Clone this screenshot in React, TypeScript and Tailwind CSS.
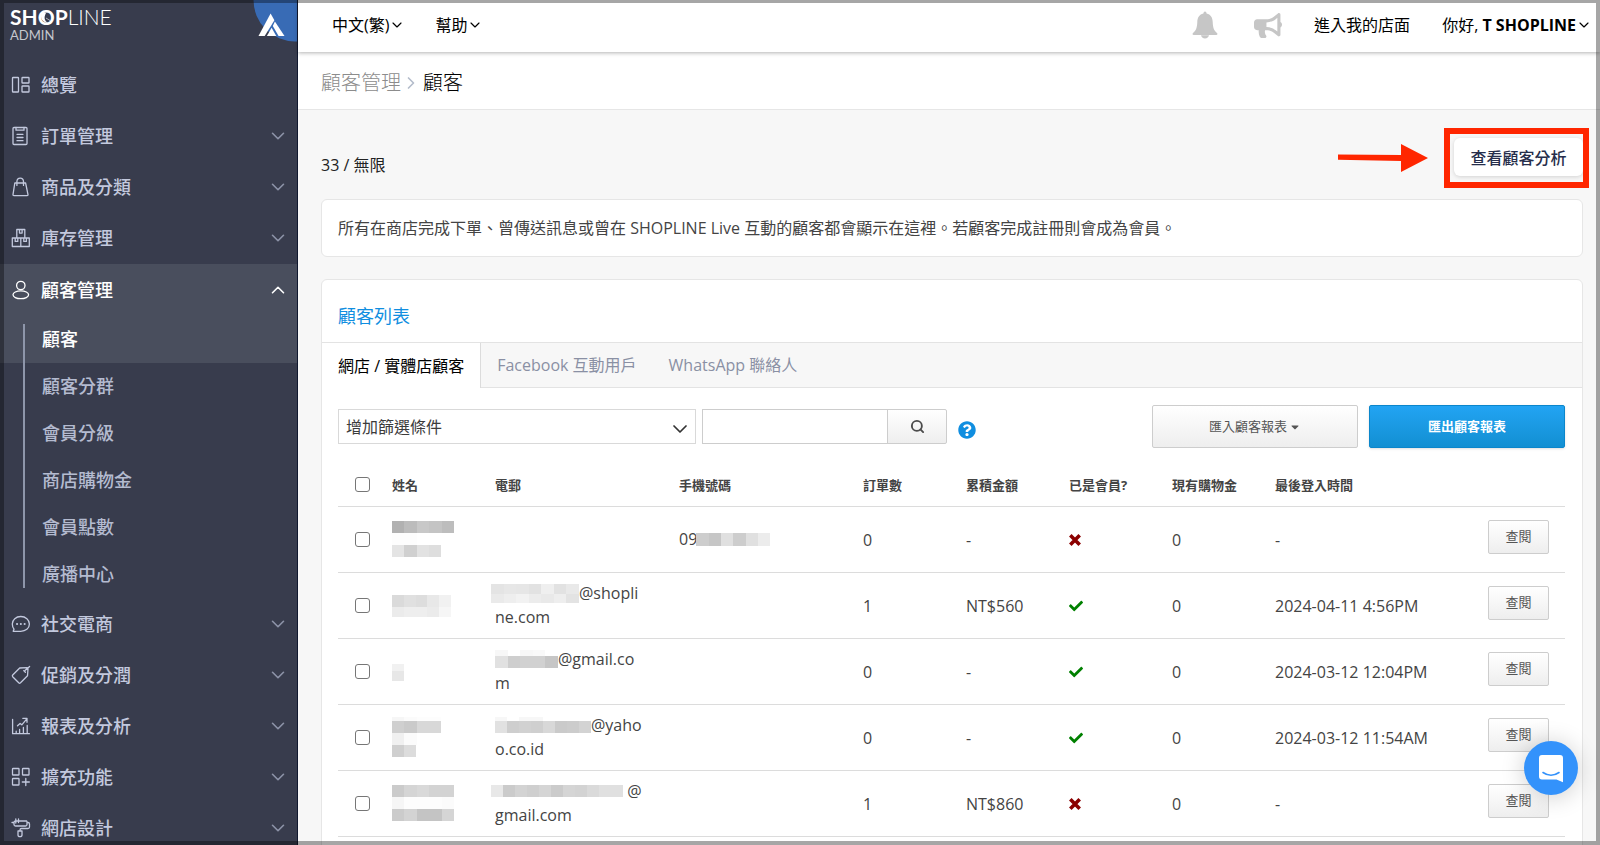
import React, { useState } from "react";
import { ChevronDown, ChevronRight, ChevronUp, Search } from "lucide-react";
import { FaBullhorn, FaCaretDown, FaCheck, FaQuestionCircle } from "react-icons/fa";

type Strip = { w: number; h: number; colors: string[] };

type Customer = {
  id: number;
  name: Strip[];
  email?: { strips: Strip[]; rest: string; second: string; className: string };
  phone?: { prefix: string; strips: Strip[] };
  orders: number;
  total: string;
  member: boolean;
  credit: number;
  lastLogin: string;
};

const customers: Customer[] = [
  {
    id: 1,
    name: [
      { w: 62, h: 12, colors: ["#b1b1b1", "#bcbcbc", "#c8c8c8", "#c4c4c4", "#bdbdbd"] },
      { w: 62, h: 12, colors: ["#fdfdfd", "#fdfdfd", "#ffffff", "#ffffff", "#ffffff"] },
      { w: 49, h: 12, colors: ["#e4e4e4", "#d0d0d0", "#e2e2e2", "#dedede"] },
    ],
    phone: {
      prefix: "09",
      strips: [{ w: 74, h: 13, colors: ["#cdcdcd", "#c6c6c6", "#e0e0e0", "#cdcdcd", "#e0e0e0", "#ececec"] }],
    },
    orders: 0,
    total: "-",
    member: false,
    credit: 0,
    lastLogin: "-",
  },
  {
    id: 2,
    name: [
      { w: 59, h: 12, colors: ["#dadada", "#e0e0e0", "#dddddd", "#e8e8e8", "#f1f1f1"] },
      { w: 59, h: 10, colors: ["#ebebeb", "#eeeeee", "#eeeeee", "#ebebeb", "#f6f6f6"] },
    ],
    email: {
      strips: [
        { w: 88, h: 10, colors: ["#e4e4e4", "#e7e7e7", "#e6e6e6", "#e2e2e2", "#efefef", "#e2e2e2", "#e9e9e9"] },
        { w: 88, h: 9, colors: ["#eaeaea", "#eeeeee", "#f2f2f2", "#ececec", "#e9e9e9", "#eeeeee", "#e3e3e3"] },
      ],
      rest: "@shopli",
      second: "ne.com",
      className: "-ml-1",
    },
    orders: 1,
    total: "NT$560",
    member: true,
    credit: 0,
    lastLogin: "2024-04-11 4:56PM",
  },
  {
    id: 3,
    name: [
      { w: 12, h: 7, colors: ["#f1f1f1"] },
      { w: 12, h: 10, colors: ["#e7e7e7"] },
    ],
    email: {
      strips: [
        { w: 63, h: 6, colors: ["#f7f7f7", "#ffffff", "#f7f7f7", "#f9f9f9", "#ffffff"] },
        { w: 63, h: 12, colors: ["#e1e1e1", "#cecece", "#d1d1d1", "#d1d1d1", "#c6c6c6"] },
      ],
      rest: "@gmail.co",
      second: "m",
      className: "",
    },
    orders: 0,
    total: "-",
    member: true,
    credit: 0,
    lastLogin: "2024-03-12 12:04PM",
  },
  {
    id: 4,
    name: [
      { w: 49, h: 4, colors: ["#f6f6f6", "#fbfbfb", "#fdfdfd", "#fdfdfd"] },
      { w: 49, h: 12, colors: ["#cfcfcf", "#cacaca", "#d8d8d8", "#d8d8d8"] },
      { w: 49, h: 12, colors: ["#f0f0f0", "#fbfbfb", "#ffffff", "#ffffff"] },
      { w: 24, h: 12, colors: ["#cfcfcf", "#dcdcdc"] },
    ],
    email: {
      strips: [
        { w: 96, h: 4, colors: ["#f7f7f7", "#ffffff", "#f7f7f7", "#f7f7f7", "#ffffff", "#ffffff", "#ffffff", "#ffffff"] },
        { w: 96, h: 12, colors: ["#e1e1e1", "#cecece", "#d1d1d1", "#cfcfcf", "#d8d8d8", "#cacaca", "#cccccc", "#d3d3d3"] },
      ],
      rest: "@yaho",
      second: "o.co.id",
      className: "",
    },
    orders: 0,
    total: "-",
    member: true,
    credit: 0,
    lastLogin: "2024-03-12 11:54AM",
  },
  {
    id: 5,
    name: [
      { w: 62, h: 12, colors: ["#cbcbcb", "#d5d5d5", "#d9d9d9", "#d3d3d3", "#d3d3d3"] },
      { w: 62, h: 12, colors: ["#f6f6f6", "#fdfdfd", "#fdfdfd", "#fdfdfd", "#fbfbfb"] },
      { w: 62, h: 12, colors: ["#cbcbcb", "#d3d3d3", "#c4c4c4", "#c4c4c4", "#d5d5d5"] },
    ],
    email: {
      strips: [
        { w: 132, h: 12, colors: ["#e8e8e8", "#cbcbcb", "#d3d3d3", "#cfcfcf", "#d5d5d5", "#cbcbcb", "#d5d5d5", "#d3d3d3", "#dadada", "#e0e0e0", "#e0e0e0"] },
      ],
      rest: " @",
      second: "gmail.com",
      className: "-ml-1",
    },
    orders: 1,
    total: "NT$860",
    member: false,
    credit: 0,
    lastLogin: "-",
  },
];

const subItems = ["顧客", "顧客分群", "會員分級", "商店購物金", "會員點數", "廣播中心"];

const Mosaic = ({ strips, className = "" }: { strips: Strip[]; className?: string }) => (
  <span className={`inline-flex flex-col ${className}`}>
    {strips.map((s, i) => (
      <span key={i} className="flex" style={{ width: s.w, height: s.h }}>
        {s.colors.map((c, j) => (
          <span key={j} className="flex-1" style={{ backgroundColor: c }} />
        ))}
      </span>
    ))}
  </span>
);

const Icon = ({ children }: { children: React.ReactNode }) => (
  <svg
    viewBox="0 0 20 20"
    className="size-5 shrink-0"
    fill="none"
    stroke="currentColor"
    strokeWidth="1.3"
    strokeLinecap="round"
    strokeLinejoin="round"
    aria-hidden="true"
  >
    {children}
  </svg>
);

const icons = {
  overview: (
    <Icon>
      <rect x="1.5" y="2.5" width="6" height="14.5" rx="0.6" />
      <rect x="11" y="2.5" width="7" height="5.5" rx="0.6" />
      <rect x="11" y="11" width="7" height="6" rx="0.6" />
    </Icon>
  ),
  orders: (
    <Icon>
      <rect x="2" y="1.5" width="14" height="17" rx="1" />
      <path d="M5 1.5v2.7h8V1.5M6 8.3h6M6 11.5h6M6 14.7h6" />
    </Icon>
  ),
  products: (
    <Icon>
      <path d="M3.8 6h10.8l2.4 11.6q.1 1-.9 1H2.9q-1 0-.9-1zM5.9 8.4V4.6q.2-3.4 3.3-3.4t3.3 3.4v3.8" />
    </Icon>
  ),
  stock: (
    <Icon>
      <path d="M5.8 10V1.5h8V10M8.5 1.5v3.6h2.6V1.5M1.3 10h17v8.5h-17zM9.8 10v8.5M4.2 10v3.4h2.6V10M12.8 10v3.4h2.6V10" />
    </Icon>
  ),
  customers: (
    <Icon>
      <circle cx="9.8" cy="5.5" r="4.2" />
      <ellipse cx="9.8" cy="14.8" rx="7.8" ry="3.9" />
    </Icon>
  ),
  social: (
    <Icon>
      <path d="M3 15.2C1.9 13.8 1.3 12 1.3 10.1 1.3 5.7 5 2.5 9.8 2.5s8.6 3.2 8.6 7.6-3.8 7.2-8.6 7.2H2.2z" />
      <path d="M6 10h.1M9.8 10h.1M13.6 10h.1" strokeWidth="2" />
    </Icon>
  ),
  promo: (
    <Icon>
      <path d="M8.7 3 16 2.6q1 0 1 1l-.5 7.2-7 7q-.9.8-1.8 0l-6-6.100q-.8-.9 0-1.700zM14 5.500 18.600 1.500M12.700 5.600l1.700 1.700" />
    </Icon>
  ),
  reports: (
    <Icon>
      <path d="M1.6 3.500v14.200h16.800M5.200 17.500v-2.300M8.600 17.500v-4M12.400 17.500v-6M16.200 17.500v-8M6.500 9.700l2.600-2.300 1.700 1.400 5-6M11.800 2.300h4.200v4" />
    </Icon>
  ),
  extensions: (
    <Icon>
      <rect x="1.5" y="1.5" width="6.5" height="6.5" rx="0.6" />
      <rect x="11.5" y="1.5" width="6.5" height="6.5" rx="0.6" />
      <rect x="1.5" y="11.5" width="6.5" height="6.5" rx="0.6" />
      <path d="M14.8 11.5v7M11.3 15h7" />
    </Icon>
  ),
  design: (
    <Icon>
      <path d="M1 4.5h2M15.5 3H4.500Q3 3 3 4.500V6.500Q3 8 4.500 8h10q1.500 0 1.500-1.500V4.500Q16 3 15.500 3M16 4.500h1q1.500 0 1.500 1.500v3q0 1.500-1.500 1.500H10.500q-1.500 0-1.500 1.500V13M7 13h4v4q0 1.700-2 1.700t-2-1.700zM4.800 1v4M7.500 1v3.500" />
    </Icon>
  ),
};

type NavItemProps = { icon: React.ReactNode; label: string; expandable?: boolean };

const NavItem = ({ icon, label, expandable = true }: NavItemProps) => (
  <a href="#" className="flex h-[51px] items-center gap-2.5 pr-2 pl-[11px] text-lg font-medium text-[#c3c9de]">
    {icon}
    <span className="flex-1">{label}</span>
    {expandable && <ChevronDown className="size-[22px] text-[#8d93a8]" strokeWidth={1.75} />}
  </a>
);

const Logo = () => (
  <div className="pt-1.5 pl-2.5 font-['Lato',sans-serif]">
    <div className="relative flex h-[22px] items-center text-[21px] leading-[22px] text-white">
      <span className="font-bold">SHOP</span>
      <span className="font-light">LINE</span>
      {/* bird inside the O */}
      <svg viewBox="0 0 16 16" className="absolute top-[3px] left-7 size-4" fill="none" aria-hidden="true">
        <path d="M4.500 3C1.500 7 3 13.500 10 13.800 6.500 12 5.500 8.500 8 4z" fill="#fff" />
        <path d="M8 9l4 2.500" stroke="#fff" strokeWidth="0.6" />
      </svg>
    </div>
    <div className="text-[13px] leading-[14px] text-[#c6c8ce]">ADMIN</div>
  </div>
);

const Sidebar = () => (
  <aside className="w-[298px] shrink-0 overflow-hidden border-r border-[#10182f] bg-[#383c4d]">
    <div className="flex h-[59px] justify-between">
      <Logo />
      <svg viewBox="0 0 44 42" className="h-[42px] w-11" aria-hidden="true">
        <circle cx="42" cy="0" r="41.5" fill="#386bb5" />
        <path d="M17.6 13.5 21.4 20.3 11.7 36H5.5z" fill="#fff" />
        <path d="M21.9 21.5 31.5 36H25.600L19.800 26z" fill="#fff" />
        <path d="M18.6 27.8 23.3 36H13.900z" fill="#fff" />
      </svg>
    </div>
    <nav>
      <NavItem icon={icons.overview} label="總覽" expandable={false} />
      <NavItem icon={icons.orders} label="訂單管理" />
      <NavItem icon={icons.products} label="商品及分類" />
      <NavItem icon={icons.stock} label="庫存管理" />
      <a
        href="#"
        className="mt-px flex h-[52px] items-center gap-2.5 bg-[#494e5d] pr-2 pl-[11px] text-lg font-medium text-white"
      >
        {icons.customers}
        <span className="flex-1">顧客管理</span>
        <ChevronUp className="size-[22px]" strokeWidth={1.75} />
      </a>
      <ul className="relative before:absolute before:top-2 before:bottom-2.5 before:left-[23px] before:w-0.5 before:bg-[#8e96aa]">
        {subItems.map((item, i) => (
          <li key={item}>
            <a
              href="#"
              className={`flex h-[47px] items-center pb-0.5 pl-[42px] text-lg font-medium ${
                i === 0 ? "bg-[#494e5d] text-white" : "text-[#b4bbd0]"
              }`}
            >
              {item}
            </a>
          </li>
        ))}
      </ul>
      <NavItem icon={icons.social} label="社交電商" />
      <NavItem icon={icons.promo} label="促銷及分潤" />
      <NavItem icon={icons.reports} label="報表及分析" />
      <NavItem icon={icons.extensions} label="擴充功能" />
      <NavItem icon={icons.design} label="網店設計" />
    </nav>
  </aside>
);

const TopBar = () => (
  <header className="relative z-10 flex h-[52px] shrink-0 items-center justify-between bg-white pr-2 pb-0.5 pl-[34px] text-base text-black shadow-[0_1px_4px_rgba(0,0,0,0.3)]">
    <div className="flex items-center gap-[30px]">
      <button type="button" className="flex items-center">
        中文(繁)
        <ChevronDown className="size-4" strokeWidth={1.75} />
      </button>
      <button type="button" className="flex items-center">
        幫助
        <ChevronDown className="size-4" strokeWidth={1.75} />
      </button>
    </div>
    <div className="flex items-center gap-8">
      <button type="button" aria-label="通知">
        <svg viewBox="0 0 26 28" className="h-7 w-[26px]" fill="#c6c6c6" aria-hidden="true">
          <path d="M13 0.500q1.500 0 1.600 2c4 .9 6 4.100 6.100 8.500.2 5.500 1.200 8.600 4.300 11 .9.800.6 2-.8 2H1.800c-1.400 0-1.700-1.200-.8-2 3.100-2.400 4.100-5.500 4.300-11 .1-4.400 2.100-7.600 6.100-8.500q.1-2 1.600-2zM9 24.300h8c-.3 2-1.900 3.200-4 3.200s-3.700-1.200-4-3.200z" />
        </svg>
      </button>
      <button type="button" aria-label="公告" className="ml-1">
        <FaBullhorn className="h-[25px] w-7 text-[#c6c6c6]" />
      </button>
      <a href="#">進入我的店面</a>
      <button type="button" className="flex items-center">
        <span>
          你好, <b className="font-bold">T SHOPLINE</b>
        </span>
        <ChevronDown className="size-4" strokeWidth={1.75} />
      </button>
    </div>
  </header>
);

const tabs = ["網店 / 實體店顧客", "Facebook 互動用戶", "WhatsApp 聯絡人"];

const Tabs = () => {
  const [active, setActive] = useState(0);

  return (
    <div role="tablist" className="flex h-[46px] border-y border-[#e3e3e3] bg-[#f7f7f7]">
      {tabs.map((tab, i) => (
        <button
          key={tab}
          type="button"
          role="tab"
          aria-selected={active === i}
          onClick={() => setActive(i)}
          className={`px-4 text-base ${
            active === i ? "-mb-px border-r border-[#dcdcdc] bg-white text-black" : "text-[#8a90a4]"
          }`}
        >
          {tab}
        </button>
      ))}
    </div>
  );
};

const Filters = () => (
  <div className="flex items-start justify-between gap-4 pt-[17px] pr-[17px] pl-4">
    <div className="flex pt-1">
      <div className="relative">
        <select
          aria-label="增加篩選條件"
          className="h-[35px] w-[358px] appearance-none border border-[#d9d9d9] bg-white px-[7px] text-base text-[#3c3c3c]"
        >
          <option>增加篩選條件</option>
        </select>
        <ChevronDown className="pointer-events-none absolute top-2 right-1 size-6 text-[#333]" strokeWidth={1.75} />
      </div>
      <input
        type="text"
        aria-label="搜尋顧客"
        className="ml-1.5 h-[35px] w-[186px] border border-[#cdcdcd] bg-white px-2 text-base"
      />
      <button
        type="button"
        aria-label="搜尋"
        className="-ml-px flex h-[35px] w-[60px] items-center justify-center rounded-r-xs border border-[#cdcdcd] bg-linear-to-b from-white to-[#eeeeee] text-[#4c4c4c]"
      >
        <Search className="size-[15px]" strokeWidth={3} />
      </button>
      <button type="button" aria-label="說明" className="mt-3 ml-[11px] size-[18px] text-[#108ee0]">
        <FaQuestionCircle className="size-[18px]" />
      </button>
    </div>
    <div className="flex gap-[11px] text-[13px]">
      <button
        type="button"
        className="flex h-[43px] w-[206px] items-center justify-center gap-0.5 rounded-xs border border-[#cdcdcd] bg-linear-to-b from-white to-[#eeeeee] text-[#555]"
      >
        匯入顧客報表
        <FaCaretDown className="size-3" />
      </button>
      <button
        type="button"
        className="h-[43px] w-[196px] rounded-xs border border-[#0b86cb] bg-linear-to-b from-[#22a4f3] to-[#128fd2] font-bold text-white shadow-sm"
      >
        匯出顧客報表
      </button>
    </div>
  </div>
);

const CustomerRow = ({ customer: c }: { customer: Customer }) => (
  <tr className="h-[66px] border-t border-[#dcdcdc]">
    <td className="pl-[17px]">
      <input
        type="checkbox"
        aria-label={`選取顧客 ${c.id}`}
        className="block size-[15px] appearance-none rounded-[3px] border border-[#767676] bg-white checked:bg-[#108ee0]"
      />
    </td>
    <td className="px-2">
      <Mosaic strips={c.name} className="align-middle" />
    </td>
    <td className="px-2 leading-6 whitespace-nowrap">
      {c.email && (
        <>
          <div className="flex h-6 items-center whitespace-pre">
            <Mosaic strips={c.email.strips} className={c.email.className} />
            {c.email.rest}
          </div>
          <div>{c.email.second}</div>
        </>
      )}
    </td>
    <td className="px-2">
      {c.phone && (
        <div className="flex items-center">
          {c.phone.prefix}
          <Mosaic strips={c.phone.strips} className="-ml-px" />
        </div>
      )}
    </td>
    <td className="px-2 pt-0.5">{c.orders}</td>
    <td className="px-2 pt-0.5">{c.total}</td>
    <td className="px-2 pt-0.5">
      {c.member ? (
        <FaCheck className="size-3.5 text-[#008000]" aria-label="是" />
      ) : (
        <svg viewBox="0 0 12 12" className="size-3" stroke="#8b0000" strokeWidth="3.6" aria-label="否">
          <path d="M1.3 1.3 10.7 10.7M10.7 1.3 1.3 10.7" />
        </svg>
      )}
    </td>
    <td className="px-2 pt-0.5">{c.credit}</td>
    <td className="px-2 pt-0.5 whitespace-nowrap">{c.lastLogin}</td>
    <td className="pr-4 pb-1 text-right">
      <button
        type="button"
        className="h-[34px] w-[61px] rounded-xs border border-[#cdcdcd] bg-linear-to-b from-white to-[#eeeeee] text-[13px] text-[#555]"
      >
        查閱
      </button>
    </td>
  </tr>
);

const CustomerTable = () => (
  <div className="pt-5 pr-[17px] pl-4">
    <table className="w-full table-fixed border-collapse text-left text-base text-[#444]">
      <colgroup>
        <col className="w-[46px]" />
        <col className="w-[103px]" />
        <col className="w-[184px]" />
        <col className="w-[184px]" />
        <col className="w-[103px]" />
        <col className="w-[103px]" />
        <col className="w-[103px]" />
        <col className="w-[103px]" />
        <col className="w-[206px]" />
        <col className="w-[92px]" />
      </colgroup>
      <thead>
        <tr className="h-[38px] text-[13px]">
          <th className="pb-1 pl-[17px]">
            <input
              type="checkbox"
              aria-label="選取全部"
              className="block size-[15px] appearance-none rounded-[3px] border border-[#767676] bg-white checked:bg-[#108ee0]"
            />
          </th>
          <th className="px-2 pb-0.5 font-bold">姓名</th>
          <th className="px-2 pb-0.5 font-bold">電郵</th>
          <th className="px-2 pb-0.5 font-bold">手機號碼</th>
          <th className="px-2 pb-0.5 font-bold">訂單數</th>
          <th className="px-2 pb-0.5 font-bold">累積金額</th>
          <th className="px-2 pb-0.5 font-bold">已是會員?</th>
          <th className="px-2 pb-0.5 font-bold">現有購物金</th>
          <th className="px-2 pb-0.5 font-bold">最後登入時間</th>
          <th aria-label="操作" />
        </tr>
      </thead>
      <tbody className="border-b border-[#dcdcdc]">
        {customers.map((c) => (
          <CustomerRow key={c.id} customer={c} />
        ))}
      </tbody>
    </table>
  </div>
);

const App = () => {
  return (
    <div className="flex h-screen overflow-hidden bg-[#f7f7f7] font-['Open_Sans','Noto_Sans_CJK_TC',sans-serif]">
      <Sidebar />

      <div className="flex min-w-0 flex-1 flex-col">
        <TopBar />

        <div className="flex h-[58px] shrink-0 items-center border-b border-[#e6e6e6] bg-white pt-1 pl-[23px] text-xl font-light">
          <a href="#" className="text-[#8c8c8c]">
            顧客管理
          </a>
          <ChevronRight className="mr-0.5 size-5 text-[#b4bccb]" strokeWidth={2} />
          <span className="text-black">顧客</span>
        </div>

        <main className="flex-1 overflow-hidden pr-[17px] pl-[23px]">
          <div className="flex items-start justify-between pt-7">
            <p className="pt-[15px] text-base text-[#222]">33 / 無限</p>
            <div className="relative">
              <button
                type="button"
                className="h-[38px] w-[129px] rounded-md bg-white pt-0.5 text-base font-medium text-[#262e4b] shadow-[0_1px_4px_rgba(0,0,0,0.15)]"
              >
                查看顧客分析
              </button>
              <div className="pointer-events-none absolute -top-2.5 -right-1.5 -bottom-3 -left-2.5 border-6 border-[#ff2600]" />
              <svg
                viewBox="0 0 90 28"
                className="absolute top-1.5 right-[155px] h-7 w-[90px]"
                fill="#ff2600"
                aria-hidden="true"
              >
                <path d="M0 10.5 63 11V0L90 14 63 28V17L0 15.7z" />
              </svg>
            </div>
          </div>

          <p className="mt-[22px] rounded-md border border-[#e6e6e6] bg-white px-4 py-4 text-base text-[#444]">
            所有在商店完成下單、曾傳送訊息或曾在 SHOPLINE Live 互動的顧客都會顯示在這裡。若顧客完成註冊則會成為會員。
          </p>

          <section className="mt-[22px] rounded-md border border-[#e6e6e6] bg-white pb-8">
            <h2 className="flex h-[62px] items-center px-4 pt-2.5 text-lg text-[#108ee0]">顧客列表</h2>
            <Tabs />
            <Filters />
            <CustomerTable />
          </section>
        </main>
      </div>

      <button
        type="button"
        aria-label="開啟客服對話"
        className="fixed right-[22px] bottom-[50px] flex size-[54px] items-center justify-center rounded-full bg-[#3392fb] shadow-[0_2px_24px_rgba(0,0,0,0.2)]"
      >
        <svg viewBox="0 0 26 29" className="h-[29px] w-[26px]" aria-hidden="true">
          <path d="M4 1h18q3 0 3 3v24.2L18.5 25.5H4q-3 0-3-3V4q0-3 3-3z" fill="#fff" />
          <path d="M5 18.5q8 5.5 16 0" fill="none" stroke="#3392fb" strokeWidth="1.6" strokeLinecap="round" />
        </svg>
      </button>

      <div className="pointer-events-none fixed inset-0 z-20 border-4 border-t-3 border-black/35" />
    </div>
  );
};

export default App;
